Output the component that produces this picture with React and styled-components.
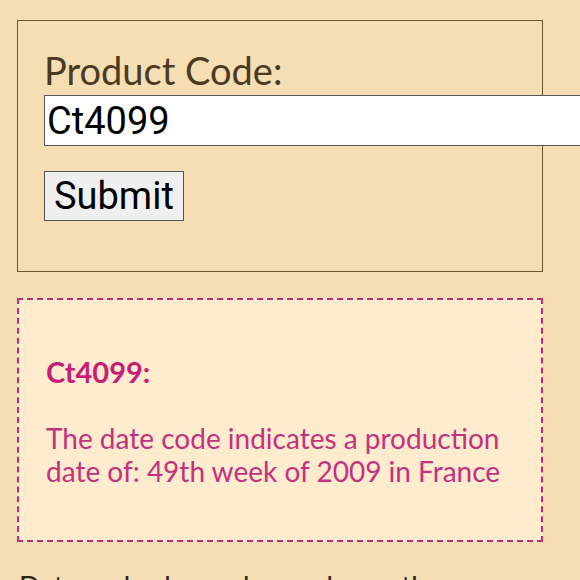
import React, { useState } from 'react'
import styled, { createGlobalStyle } from 'styled-components'

const GlobalStyle = createGlobalStyle`
    html, body {
        margin: 0;
        padding: 0;
        background: #f5deb3;
        overflow: hidden;
    }
`

const Page = styled.div`
    width: 580px;
    height: 580px;
    overflow: hidden;
    box-sizing: border-box;
    padding: 20px 37px 0 17px;
    font-family: Lato, "Open Sans", sans-serif;
`

const FormBox = styled.form`
    border: 1px solid #6b5633;
    padding: 27px 0 50px 26px;
    display: flex;
    flex-direction: column;
    align-items: flex-start;
`

const Label = styled.label`
    font-size: 38px;
    color: #4a3b22;
    line-height: 44px;
`

const CodeInput = styled.input`
    box-sizing: border-box;
    width: 560px;
    height: 51px;
    margin-top: 3px;
    padding: 0 2px;
    border: 1px solid #555;
    background: #fff;
    font-family: Roboto, sans-serif;
    font-size: 38px;
    color: #000;
    outline: none;
`

const SubmitButton = styled.button`
    margin-top: 25px;
    height: 50px;
    padding: 0 9px;
    background: #efefef;
    border: 1px solid #555;
    font-family: Roboto, sans-serif;
    font-size: 38px;
    color: #000;
`

const ResultBox = styled.div`
    margin-top: 26px;
    border: 2px dashed #c52a72;
    background: #ffebcd;
    padding: 56px 20px 52px 27px;
    color: #c4317f;
`

const ResultTitle = styled.h3`
    margin: 0 0 34px;
    font-size: 29px;
    font-weight: 700;
    color: #c81d77;
    line-height: 32px;
`

const ResultText = styled.p`
    margin: 0;
    font-size: 28px;
    line-height: 33px;
`

const Intro = styled.p`
    margin: 28px 0 0 2px;
    font-size: 28px;
    line-height: 33px;
    color: #2b2418;
`

export default function App() {
    const [code, setCode] = useState('Ct4099')

    return (
        <Page>
            <GlobalStyle />
            <FormBox onSubmit={e => e.preventDefault()}>
                <Label htmlFor="code">Product Code:</Label>
                <CodeInput id="code" value={code} onChange={e => setCode(e.target.value)} />
                <SubmitButton type="submit">Submit</SubmitButton>
            </FormBox>
            <ResultBox>
                <ResultTitle>Ct4099:</ResultTitle>
                <ResultText>
                    The date code indicates a production date of: 49th week of 2009 in France
                </ResultText>
            </ResultBox>
            <Intro>Date codes have changed over the years, so look at the chart below.</Intro>
        </Page>
    )
}
